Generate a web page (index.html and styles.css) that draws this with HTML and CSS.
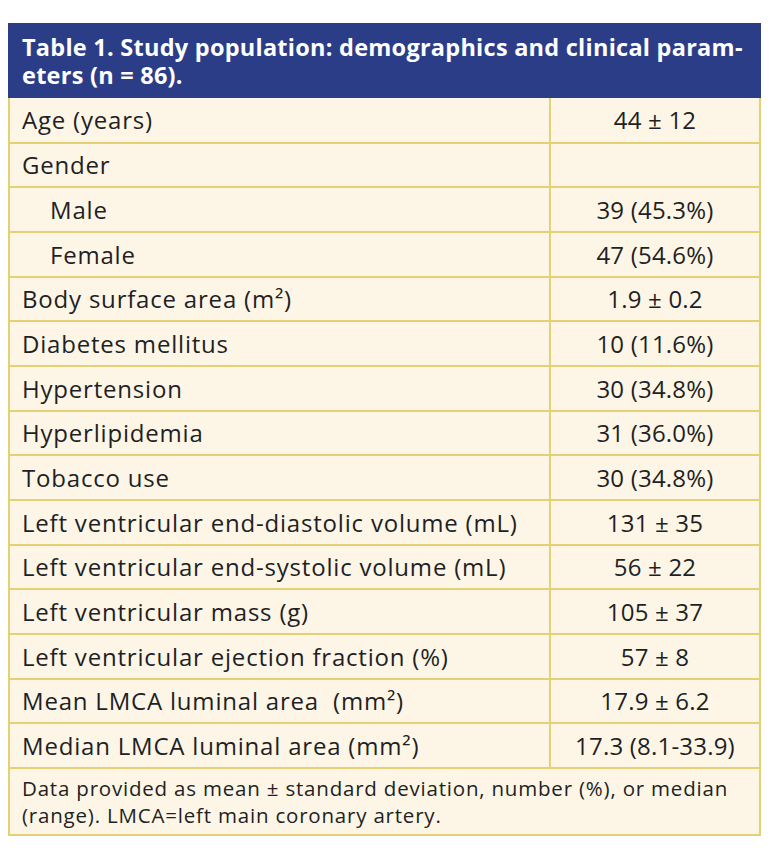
FILE: index.html
```html
<!DOCTYPE html>
<html>
<head>
<meta charset="utf-8">
<link rel="stylesheet" href="styles.css">
</head>
<body>
<div class="wrap">
  <div class="caption">Table 1. Study population: demographics and clinical param-<br>eters (n = 86).</div>
  <table class="data">
    <tr><td class="lab">Age (years)</td><td class="val">44 ± 12</td></tr>
    <tr><td class="lab">Gender</td><td class="val"></td></tr>
    <tr><td class="lab sub">Male</td><td class="val">39 (45.3%)</td></tr>
    <tr><td class="lab sub">Female</td><td class="val">47 (54.6%)</td></tr>
    <tr><td class="lab">Body surface area (m²)</td><td class="val">1.9 ± 0.2</td></tr>
    <tr><td class="lab">Diabetes mellitus</td><td class="val">10 (11.6%)</td></tr>
    <tr><td class="lab">Hypertension</td><td class="val">30 (34.8%)</td></tr>
    <tr><td class="lab">Hyperlipidemia</td><td class="val">31 (36.0%)</td></tr>
    <tr><td class="lab">Tobacco use</td><td class="val">30 (34.8%)</td></tr>
    <tr><td class="lab">Left ventricular end-diastolic volume (mL)</td><td class="val">131 ± 35</td></tr>
    <tr><td class="lab">Left ventricular end-systolic volume (mL)</td><td class="val">56 ± 22</td></tr>
    <tr><td class="lab">Left ventricular mass (g)</td><td class="val">105 ± 37</td></tr>
    <tr><td class="lab">Left ventricular ejection fraction (%)</td><td class="val">57 ± 8</td></tr>
    <tr><td class="lab">Mean LMCA luminal area&nbsp; (mm²)</td><td class="val">17.9 ± 6.2</td></tr>
    <tr><td class="lab">Median LMCA luminal area (mm²)</td><td class="val">17.3 (8.1-33.9)</td></tr>
    <tr><td class="foot" colspan="2">Data provided as mean ± standard deviation, number (%), or median<br>(range). LMCA=left main coronary artery.</td></tr>
  </table>
</div>
</body>
</html>
```
FILE: styles.css
```css
html, body {
  margin: 0;
  padding: 0;
  background: #ffffff;
}
body {
  font-family: "Open Sans", "Noto Sans", sans-serif;
  color: #221f24;
}
.wrap {
  margin: 23px 0 0 8px;
  width: 753px;
}
.caption {
  background: #2c3d88;
  color: #ffffff;
  font-weight: bold;
  font-size: 23.5px;
  letter-spacing: 0.25px;
  line-height: 28px;
  padding: 10px 14px 9px 14px;
  height: 56px;
}
.data {
  width: 753px;
  border-collapse: collapse;
  background: #fdf6e7;
}
.data td {
  border: 2px solid #e6d074;
  height: 44.67px;
  padding: 0 12px;
  font-size: 24px;
  box-sizing: border-box;
}
.data td.lab {
  width: 541px;
  letter-spacing: 0.8px;
}
.data td.sub {
  padding-left: 40px;
}
.data td.val {
  text-align: center;
  letter-spacing: 0.2px;
}
.data tr:first-child td {
  border-top: none;
}
.data td.foot {
  font-size: 20.5px;
  letter-spacing: 0.8px;
  line-height: 27px;
  padding: 6px 12px 5px 12px;
  height: auto;
}
```
